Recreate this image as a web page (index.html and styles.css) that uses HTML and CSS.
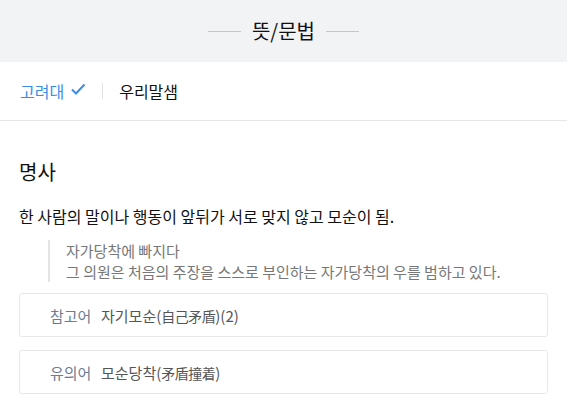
FILE: index.html
```html
<!DOCTYPE html>
<html>
<head>
	<meta charset="UTF-8">
	<title>뜻/문법</title>
	<link rel="stylesheet" href="styles.css">
</head>
<body>
<div class="head">
	<h1 class="title">뜻/문법</h1>
</div>
<ul class="tabs">
	<li class="active">고려대<svg class="check" width="16" height="12" viewBox="0 0 16 12"><path d="M2 6.5l4 4L14.5 1.5" fill="none" stroke="#3a8ee6" stroke-width="2"/></svg></li>
	<li class="sep"></li>
	<li>우리말샘</li>
</ul>
<div class="body">
	<h2 class="pos">명사</h2>
	<p class="def">한 사람의 말이나 행동이 앞뒤가 서로 맞지 않고 모순이 됨.</p>
	<div class="ex">
		<p>자가당착에 빠지다</p>
		<p>그 의원은 처음의 주장을 스스로 부인하는 자가당착의 우를 범하고 있다.</p>
	</div>
	<div class="rel"><span class="lab">참고어</span><span class="word">자기모순(<span class="hj">自己矛盾</span>)(2)</span></div>
	<div class="rel"><span class="lab">유의어</span><span class="word">모순당착(<span class="hj">矛盾撞着</span>)</span></div>
</div>
</body>
</html>
```

FILE: styles.css
```css
*{margin: 0;padding: 0}
ul,li{list-style: none;}
body{font-family: "Noto Sans CJK KR", "Noto Sans", sans-serif;color: #111;background: #fff;}

.head{height: 62px;background: #f2f3f5;display: flex;align-items: center;justify-content: center;}
.title{font-size: 20px;font-weight: 400;line-height: 62px;display: flex;align-items: center;gap: 11px;}
.title:before,.title:after{content: '';width: 33px;height: 1px;background: #c4c6ca;}

.tabs{height: 58px;border-bottom: 1px solid #e6e6e6;display: flex;align-items: center;padding: 0 20px;font-size: 16px;}
.tabs li.active{color: #3a8ee6;display: flex;align-items: center;}
.check{margin: -4px 0 0 6px;}
.tabs li.sep{width: 1px;height: 16px;background: #e2e2e2;margin: 0 16px 0 16px;}

.body{padding: 0 19px 0 19px;}
.pos{font-size: 20px;font-weight: 400;margin-top: 37px;line-height: 28px;}
.def{font-size: 16px;margin-top: 18px;line-height: 24px;}
.ex{margin: 12px 0 0 29px;border-left: 2px solid #e4e4e4;padding-left: 16px;color: #777;font-size: 15px;line-height: 21px;}
.rel{height: 44px;box-sizing: border-box;border: 1px solid #e8e8e8;border-radius: 3px;display: flex;align-items: center;padding-left: 30px;font-size: 15px;margin-top: 11px;}
.rel + .rel{margin-top: 13px;}
.lab{color: #6b7d96;width: 51px;}
.word{color: #555;}
.hj{font-size: 14px;letter-spacing: -0.5px;}
```
